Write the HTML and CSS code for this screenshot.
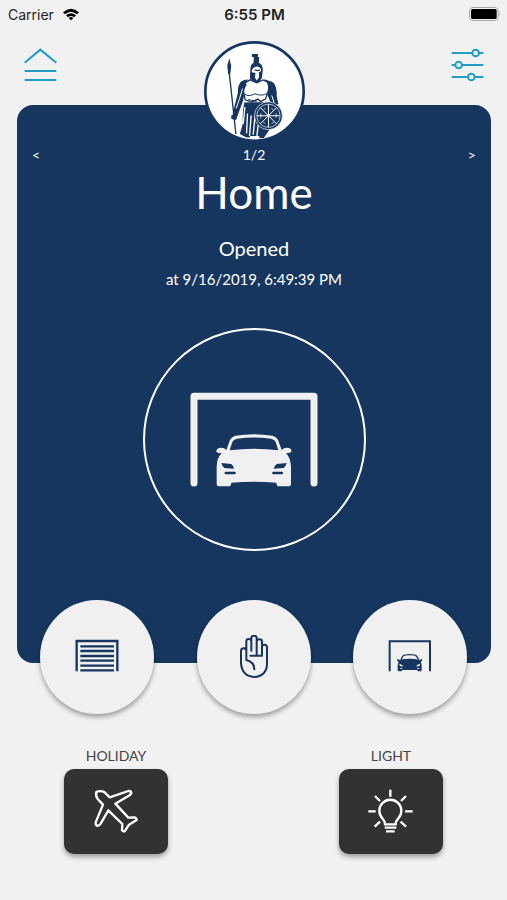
FILE: index.html
```html
<!doctype html>
<html lang="en">
    <head>
        <meta charset="UTF-8" />
        <meta name="viewport" content="width=device-width, initial-scale=1.0" />
        <title>Garage Door</title>
        <link rel="stylesheet" href="styles.css">
    </head>
    <body>
        <div class="status-bar">
            <div class="carrier">
                <span>Carrier</span>
                <svg class="wifi" viewBox="0 0 54 39">
                    <path d="M3 13 Q27 -8 51 13 L45 19 Q27 4 9 19 Z" />
                    <path d="M12 22 Q27 9 42 22 L36 28 Q27 20 18 28 Z" />
                    <path d="M20 30 Q27 24 34 30 L27 37 Z" />
                </svg>
            </div>
            <strong class="time">6:55 PM</strong>
            <svg class="battery" viewBox="0 0 96 42">
                <rect x="1.5" y="1.5" width="86" height="39" rx="10" fill="none" stroke="#a5a5a5" stroke-width="3" />
                <rect x="6" y="6" width="77" height="30" rx="5" />
                <path d="M91 14 Q96 21 91 28 Z" fill="#a5a5a5" />
            </svg>
        </div>

        <header class="top-bar">
            <button class="icon-button" aria-label="Menu">
                <svg viewBox="0 0 99 102" fill="none" stroke="#1f9fc4" stroke-width="6">
                    <path d="M2 44 L49 5 L97 44 M2 69 H97 M2 96 H97" />
                </svg>
            </button>
            <svg class="logo" viewBox="25 32 304 304" role="img" aria-label="Warrior logo">
                <circle cx="177" cy="184" r="148" fill="#fff" stroke="#17365f" stroke-width="8" />
                <!-- spear -->
                <path d="M101 84 L107 107 L104 132 L98 132 L95 107 Z" fill="#17365f" />
                <path d="M101 128 L121 312" stroke="#17365f" stroke-width="4" />
                <!-- skirt and legs -->
                <path d="M146 217 Q140 250 142 280 L133 312 L151 322 L205 324 L222 299 L215 216 Z" fill="#17365f" />
                <path d="M156 250 L153 310 M167 256 L162 318 M179 254 L173 314 M148 231 L143 282 M188 285 L184 320" stroke="#fff" stroke-width="4" fill="none" />
                <!-- arms -->
                <path d="M157 147 L137 154 Q126 164 127 188 L112 248 L111 266 L122 269 L127 254 L142 213 L147 190 L151 160 Z" fill="#17365f" />
                <path d="M207 147 L234 157 Q245 170 244 199 L249 222 L230 227 L214 190 Z" fill="#17365f" />
                <path d="M142 172 L132 205 L122 235 M229 196 L236 217" stroke="#fff" stroke-width="3" fill="none" />
                <!-- breastplate -->
                <path d="M148 158 L164 149 L183 158 L203 149 L221 158 L219 181 L210 207 L196 214 L187 207 L168 216 L149 209 L144 184 Z" fill="#fff" stroke="#17365f" stroke-width="4" />
                <path d="M147 192 Q160 201 178 191 Q200 199 215 190 M158 208 L184 214" fill="none" stroke="#17365f" stroke-width="3" />
                <path d="M135 156 L149 148 L153 165 L143 182 Z M213 151 L229 155 L231 180 L218 170 Z" fill="#17365f" />
                <!-- helmet -->
                <path d="M165 112 Q167 96 183 96 Q202 98 202 119 L199 143 L191 156 L174 155 L163 144 Z" fill="#17365f" />
                <path d="M169 119 Q175 109 187 109 Q197 112 197 122 L190 127 L191 141 L184 151 L178 142 L180 128 L169 126 Z" fill="#fff" />
                <path d="M177 119 L187 121 L194 119" stroke="#17365f" stroke-width="4" fill="none" />
                <path d="M169 71 H188 L187 80 H191 L190 98 H174 L175 80 H169 Z" fill="#17365f" />
                <path d="M107 256 Q119 251 123 260 L119 270 L107 266 Z" fill="#17365f" />
                <!-- shield -->
                <circle cx="219" cy="257" r="42" fill="#17365f" stroke="#fff" stroke-width="2" />
                <circle cx="219" cy="257" r="35" fill="none" stroke="#fff" stroke-width="2" />
                <path d="M185 257 H253 M219 223 V291 M195 233 L243 281 M195 281 L243 233" stroke="#fff" stroke-width="3" />
                <path d="M205 238 L210 235 M228 235 L234 239 M242 249 V264 M235 277 L228 281 M210 281 L203 276 M196 265 V249" stroke="#fff" stroke-width="2" />
                <path d="M163 318 H192 L189 328 H165 Z" fill="#fff" />
            </svg>
            <button class="icon-button" aria-label="Settings">
                <svg viewBox="0 0 99 102" stroke="#1f9fc4" stroke-width="6" fill="#f1f1f1">
                    <path d="M2 15 H97 M2 51 H97 M2 87 H97" />
                    <circle cx="74" cy="15" r="10" />
                    <circle cx="23" cy="51" r="10" />
                    <circle cx="61" cy="87" r="10" />
                </svg>
            </button>
        </header>

        <main>
            <section class="door-card">
                <nav class="pager">
                    <button aria-label="Previous door">&lt;</button>
                    <span>1/2</span>
                    <button aria-label="Next door">&gt;</button>
                </nav>
                <h1>Home</h1>
                <p class="state">Opened</p>
                <p class="state-time">at 9/16/2019, 6:49:39 PM</p>
                <div class="door-circle">
                    <svg viewBox="156 210 402 300" role="img" aria-label="Door open">
                        <path d="M177 489 V229 H537 V489" fill="none" stroke="#f0f0f0" stroke-width="21" stroke-linecap="round" stroke-linejoin="round" />
                        <path fill="#f0f0f0" fill-rule="evenodd" d="M274 390 L284 362 Q289 350 302 347 Q357 338 412 347 Q425 350 430 362 L440 390 Q448 381 462 384 Q471 387 469 395 Q463 400 453 400 Q467 414 468 440 V493 Q468 499 462 499 H431 Q425 499 424 488 Q357 482 289 488 Q288 499 282 499 H251 Q245 499 245 493 V440 Q245 414 260 400 Q248 400 244 395 Q243 387 252 384 Q266 381 274 390 Z M284 391 Q357 382 430 391 L422 366 Q419 358 408 356 Q357 349 306 356 Q295 358 292 366 Z M259 429 L289 432 Q296 438 297 446 L268 444 Q262 440 259 429 Z M455 429 L425 432 Q418 438 416 446 L446 444 Q452 440 455 429 Z" />
                        <path d="M272 459 H299 M415 459 H441" stroke="#17365f" stroke-width="7" stroke-linecap="round" />
                    </svg>
                </div>
            </section>

            <div class="door-actions">
                <button class="round-button" aria-label="Close door">
                    <svg viewBox="195 136 132 132" fill="none" stroke="#17365f">
                        <path d="M200 245 V154 H322 V245" stroke-width="7" />
                        <path d="M211 170 H312 M211 184 H312 M211 199 H312 M211 213 H312 M211 228 H312 M211 242 H312" stroke-width="7" />
                    </svg>
                </button>
                <button class="round-button" aria-label="Stop door">
                    <svg viewBox="126 136 132 132" fill="none" stroke="#17365f" stroke-width="6" stroke-linecap="round" stroke-linejoin="round">
                        <path d="M169 205 V155 Q169 148 176 148 Q184 148 184 155 V183 M184 153 V145 Q185 138 192 138 Q200 138 200 145 V198 M200 156 Q200 149 208 149 Q216 149 216 156 V198 M216 171 Q217 165 223 165 Q231 165 231 173 V224 Q229 260 192 262 Q157 260 153 222 V184 Q153 176 161 176 Q169 176 169 184 V211 Q193 217 193 239 M181 198 H216" />
                    </svg>
                </button>
                <button class="round-button" aria-label="Open door">
                    <svg viewBox="146 136 132 132">
                        <path d="M151 245 V155 H272 V245" fill="none" stroke="#17365f" stroke-width="6" />
                        <path d="M185 210 L190 200 Q194 195 211 195 Q229 195 232 200 L238 210" fill="none" stroke="#17365f" stroke-width="4" />
                        <path d="M180 211 Q211 204 242 211 L247 207 L249 213 L244 216 Q247 222 247 229 V242 Q247 245 244 245 H236 L233 241 H189 L186 245 H178 Q175 245 175 242 V229 Q175 222 178 216 L173 213 L175 207 Z" fill="#17365f" />
                        <path d="M179 222 L189 226 L190 231 L182 229 Z M243 222 L233 226 L232 231 L240 229 Z M182 236 H189 V238 H182 Z M233 236 H240 V238 H233 Z" fill="#f0f0f0" />
                    </svg>
                </button>
            </div>

            <div class="switches">
                <div class="switch">
                    <label for="holiday">HOLIDAY</label>
                    <button id="holiday" class="square-button">
                        <svg viewBox="125 138 150 150" fill="none" stroke="#fff" stroke-width="7" stroke-linejoin="round">
                            <path d="M141 153 Q153 147 166 154 L181 169 L237 150 Q245 149 246 156 L242 162 L198 188 L237 230 L255 229 Q262 231 262 237 L239 251 L226 271 Q221 272 218 268 L219 249 L177 208 L154 248 Q149 256 142 254 Q138 251 139 244 L161 191 L145 174 Q138 164 141 153 Z" />
                        </svg>
                    </button>
                </div>
                <div class="switch">
                    <label for="light">LIGHT</label>
                    <button id="light" class="square-button">
                        <svg viewBox="139 138 150 150" fill="none" stroke="#fff" stroke-width="7">
                            <path d="M196 250 Q196 240 188 232 A33 33 0 1 1 236 232 Q228 240 228 250 Z" />
                            <path d="M195 260 H230 M199 271 H225" />
                            <path d="M212 146 V167 M166 165 L181 180 M259 165 L244 180 M146 211 H168 M256 211 H279 M181 242 L165 257 M243 242 L259 257" />
                        </svg>
                    </button>
                </div>
            </div>
        </main>
    </body>
</html>
```
FILE: styles.css
```css
* {
    box-sizing: border-box;
}
body {
    margin: 0;
    font-family: Futura, Lato, sans-serif;
    background: #f1f1f1;
    color: #444;
}
button {
    padding: 0;
    border: none;
    background: none;
    font: inherit;
    color: inherit;
    cursor: pointer;
}
svg {
    display: block;
}
h1,
p {
    margin: 0;
    font-weight: normal;
}
.status-bar {
    display: grid;
    grid-template-columns: 1fr auto 1fr;
    align-items: center;
    height: 28px;
    padding: 0 6px 0 8px;
    font-family: Inter, sans-serif;
    font-size: 14px;
    color: #222;
}
.carrier {
    display: flex;
    align-items: center;
    gap: 8px;
}
.wifi {
    width: 18px;
    height: 13px;
}
.time {
    font-size: 15px;
    font-weight: 600;
}
.battery {
    width: 32px;
    height: 14px;
    justify-self: end;
}
.top-bar {
    display: flex;
    justify-content: space-between;
    align-items: flex-start;
    height: 77px;
    padding: 13px 23px 0 24px;
}
.icon-button {
    margin-top: 7px;
}
.icon-button svg {
    width: 33px;
    height: 34px;
}
/* the logo hangs over the top edge of the card */
.logo {
    position: relative;
    z-index: 1;
    width: 101px;
    height: 101px;
}
.door-card {
    margin: 0 16px 0 17px;
    padding: 42px 15px 112px;
    border-radius: 16px;
    background: #17365f;
    color: #fff;
    text-align: center;
}
.pager {
    display: flex;
    justify-content: space-between;
    font-size: 14px;
    line-height: 16px;
}
h1 {
    margin-top: 3px;
    font-size: 44px;
    line-height: 52px;
}
.state {
    margin-top: 18px;
    font-size: 20px;
    line-height: 24px;
}
.state-time {
    margin-top: 9px;
    font-size: 15px;
    line-height: 20px;
}
.door-circle {
    display: flex;
    justify-content: center;
    align-items: center;
    width: 223px;
    height: 223px;
    margin: 39px auto 0;
    border: 2px solid #fff;
    border-radius: 50%;
}
.door-circle svg {
    width: 134px;
    height: 100px;
}
.door-actions {
    display: flex;
    justify-content: space-between;
    margin-top: -63px;
    padding: 0 40px;
}
.round-button {
    display: flex;
    justify-content: center;
    align-items: center;
    width: 114px;
    height: 114px;
    border-radius: 50%;
    background: #f0f0f0;
    box-shadow: 0 3px 5px rgba(0, 0, 0, 0.35);
}
.round-button svg {
    width: 44px;
    height: 44px;
}
.switches {
    display: flex;
    justify-content: space-between;
    margin-top: 33px;
    padding: 0 64px 46px;
}
.switch {
    display: flex;
    flex-direction: column;
    align-items: center;
    gap: 4px;
    font-size: 14px;
    line-height: 18px;
}
.square-button {
    display: flex;
    justify-content: center;
    align-items: center;
    width: 104px;
    height: 85px;
    border-radius: 10px;
    background: #323232;
    box-shadow: 0 3px 5px rgba(0, 0, 0, 0.35);
}
.square-button svg {
    width: 50px;
    height: 50px;
}
```
